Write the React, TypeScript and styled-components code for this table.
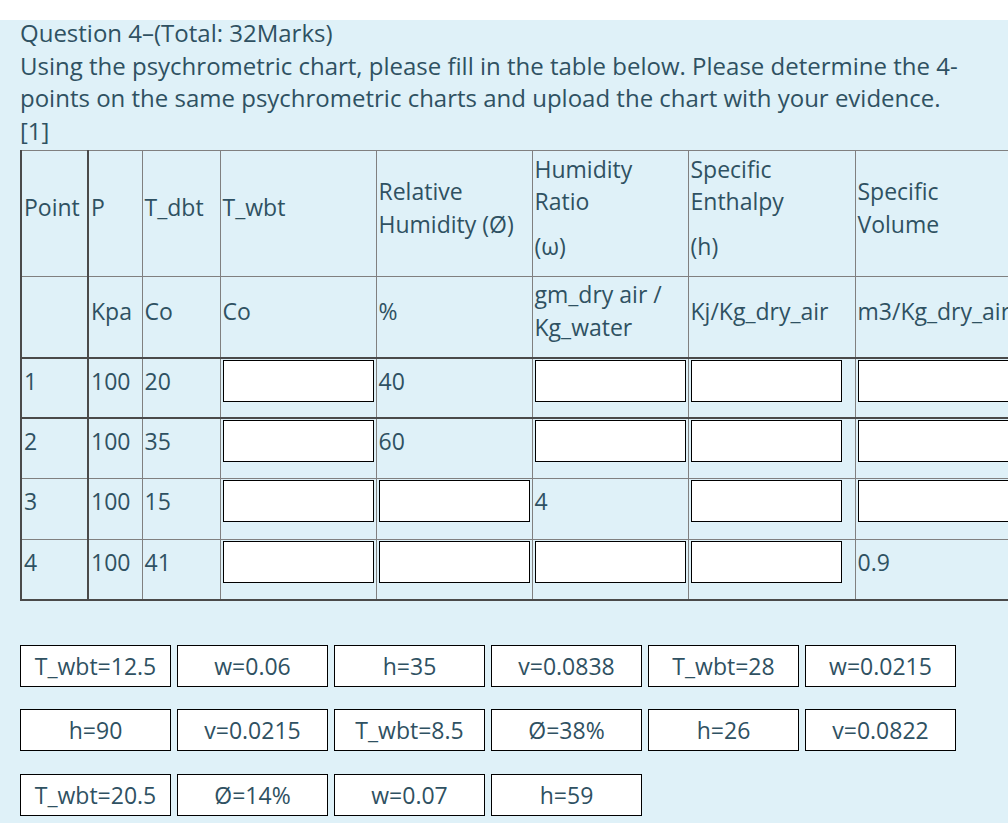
import React from "react";
import styled, { createGlobalStyle } from "styled-components";

const GlobalStyle = createGlobalStyle`
  html, body {
    margin: 0;
    padding: 0;
    background: #ffffff;
    overflow: hidden;
  }
  body {
    font-family: "Open Sans", "Noto Sans", sans-serif;
    color: #2f5162;
  }
`;

const Page = styled.div`
  display: flow-root;
  margin-top: 20px;
  background: #dff1f8;
  padding: 0 0 20px 20px;
  overflow-x: clip;
  min-height: 803px;
  box-sizing: border-box;
`;

const Intro = styled.div`
  font-size: 24px;
  line-height: 32.5px;
  color: #2f5162;
  margin-top: -3px;
  margin-bottom: 3px;
`;

const Line = styled.div`
  white-space: nowrap;
`;

const Table = styled.table`
  border-collapse: collapse;
  table-layout: fixed;
  width: 1004px;
  font-size: 23px;
  color: #2f5162;
`;

type CellProps = { $thickLeft?: boolean; $thickRight?: boolean; $thickBottom?: boolean };

const HeadCell = styled.td<CellProps>`
  border: 1px solid #808080;
  border-left: ${(p) => (p.$thickLeft ? "2px solid #4a4a4a" : "1px solid #808080")};
  border-right: ${(p) => (p.$thickRight ? "2px solid #4a4a4a" : "1px solid #808080")};
  border-bottom: ${(p) => (p.$thickBottom ? "2px solid #4a4a4a" : "1px solid #808080")};
  padding: 0 2px 12px 2px;
  vertical-align: middle;
  line-height: 32.5px;
  white-space: nowrap;
  overflow: visible;
`;

const Cell = styled.td<CellProps>`
  border: 1px solid #808080;
  border-left: ${(p) => (p.$thickLeft ? "2px solid #4a4a4a" : "1px solid #808080")};
  border-right: ${(p) => (p.$thickRight ? "2px solid #4a4a4a" : "1px solid #808080")};
  border-bottom: ${(p) => (p.$thickBottom ? "2px solid #4a4a4a" : "1px solid #808080")};
  padding: 1px 2px 0 2px;
  vertical-align: top;
  height: 60.5px;
  box-sizing: border-box;
`;

const CellContent = styled.div`
  height: 42px;
  display: flex;
  align-items: center;
  white-space: nowrap;
`;

const Field = styled.div`
  box-sizing: border-box;
  width: 151px;
  height: 42px;
  background: #ffffff;
  border: 1px solid #000000;
`;

const SymbolLine = styled.div`
  margin-top: 12px;
`;

const Bank = styled.div`
  margin-top: 44px;
  display: flex;
  flex-direction: column;
  gap: 22.5px;
`;

const BankRow = styled.div`
  display: flex;
  gap: 6px;
`;

const Chip = styled.div`
  box-sizing: border-box;
  width: 151px;
  height: 42px;
  background: #ffffff;
  border: 1px solid #000000;
  display: flex;
  align-items: center;
  justify-content: center;
  font-size: 23px;
  color: #2f5162;
  white-space: nowrap;
`;

type Row = {
  point: string;
  p: string;
  tdbt: string;
  values: (string | null)[];
  thick?: boolean;
};

const rows: Row[] = [
  { point: "1", p: "100", tdbt: "20", values: [null, "40", null, null, null], thick: true },
  { point: "2", p: "100", tdbt: "35", values: [null, "60", null, null, null] },
  { point: "3", p: "100", tdbt: "15", values: [null, null, "4", null, null] },
  { point: "4", p: "100", tdbt: "41", values: [null, null, null, null, "0.9"], thick: true },
];

const bank = [
  ["T_wbt=12.5", "w=0.06", "h=35", "v=0.0838", "T_wbt=28", "w=0.0215"],
  ["h=90", "v=0.0215", "T_wbt=8.5", "Ø=38%", "h=26", "v=0.0822"],
  ["T_wbt=20.5", "Ø=14%", "w=0.07", "h=59"],
];

export default function App() {
  return (
    <>
      <GlobalStyle />
      <Page>
        <Intro>
          <Line>Question 4–(Total: 32Marks)</Line>
          <Line>Using the psychrometric chart, please fill in the table below. Please determine the 4-</Line>
          <Line>points on the same psychrometric charts and upload the chart with your evidence.</Line>
          <Line>[1]</Line>
        </Intro>
        <Table>
          <colgroup>
            <col style={{ width: 67 }} />
            <col style={{ width: 54 }} />
            <col style={{ width: 78 }} />
            <col style={{ width: 156 }} />
            <col style={{ width: 156 }} />
            <col style={{ width: 156 }} />
            <col style={{ width: 167 }} />
            <col style={{ width: 170 }} />
          </colgroup>
          <tbody>
            <tr style={{ height: 126 }}>
              <HeadCell $thickLeft $thickRight>Point</HeadCell>
              <HeadCell>P</HeadCell>
              <HeadCell>T_dbt</HeadCell>
              <HeadCell>T_wbt</HeadCell>
              <HeadCell>
                Relative
                <br />
                Humidity (Ø)
              </HeadCell>
              <HeadCell>
                Humidity
                <br />
                Ratio
                <SymbolLine>(ω)</SymbolLine>
              </HeadCell>
              <HeadCell>
                Specific
                <br />
                Enthalpy
                <SymbolLine>(h)</SymbolLine>
              </HeadCell>
              <HeadCell>
                Specific
                <br />
                Volume
              </HeadCell>
            </tr>
            <tr style={{ height: 81 }}>
              <HeadCell $thickLeft $thickRight $thickBottom></HeadCell>
              <HeadCell $thickBottom>Kpa</HeadCell>
              <HeadCell $thickBottom>Co</HeadCell>
              <HeadCell $thickBottom>Co</HeadCell>
              <HeadCell $thickBottom>%</HeadCell>
              <HeadCell $thickBottom>
                gm_dry air /
                <br />
                Kg_water
              </HeadCell>
              <HeadCell $thickBottom>Kj/Kg_dry_air</HeadCell>
              <HeadCell $thickBottom>m3/Kg_dry_air</HeadCell>
            </tr>
            {rows.map((r) => (
              <tr key={r.point}>
                <Cell $thickLeft $thickRight $thickBottom={r.thick}>
                  <CellContent>{r.point}</CellContent>
                </Cell>
                <Cell $thickBottom={r.thick}>
                  <CellContent>{r.p}</CellContent>
                </Cell>
                <Cell $thickBottom={r.thick}>
                  <CellContent>{r.tdbt}</CellContent>
                </Cell>
                {r.values.map((v, i) => (
                  <Cell key={i} $thickBottom={r.thick}>
                    {v === null ? <Field /> : <CellContent>{v}</CellContent>}
                  </Cell>
                ))}
              </tr>
            ))}
          </tbody>
        </Table>
        <Bank>
          {bank.map((row, i) => (
            <BankRow key={i}>
              {row.map((c) => (
                <Chip key={c}>{c}</Chip>
              ))}
            </BankRow>
          ))}
        </Bank>
      </Page>
    </>
  );
}
